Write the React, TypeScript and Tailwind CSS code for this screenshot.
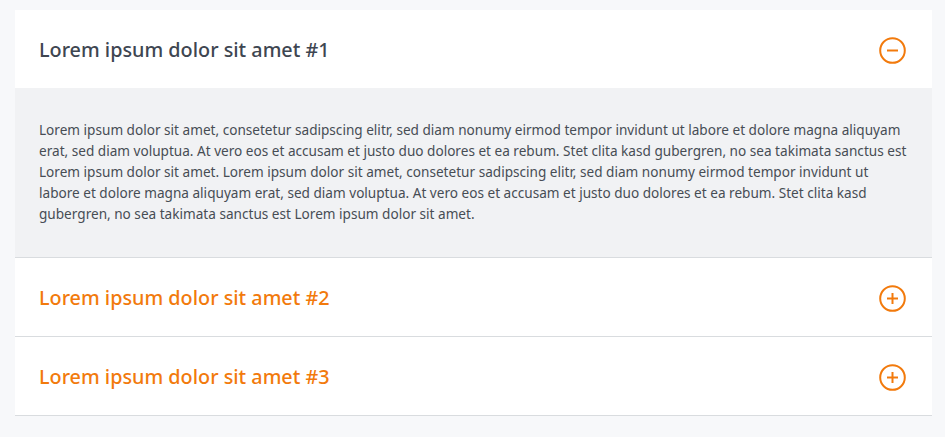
import { useState } from "react";

const items = [
  {
    title: "Lorem ipsum dolor sit amet #1",
    body: "Lorem ipsum dolor sit amet, consetetur sadipscing elitr, sed diam nonumy eirmod tempor invidunt ut labore et dolore magna aliquyam erat, sed diam voluptua. At vero eos et accusam et justo duo dolores et ea rebum. Stet clita kasd gubergren, no sea takimata sanctus est Lorem ipsum dolor sit amet. Lorem ipsum dolor sit amet, consetetur sadipscing elitr, sed diam nonumy eirmod tempor invidunt ut labore et dolore magna aliquyam erat, sed diam voluptua. At vero eos et accusam et justo duo dolores et ea rebum. Stet clita kasd gubergren, no sea takimata sanctus est Lorem ipsum dolor sit amet.",
  },
  {
    title: "Lorem ipsum dolor sit amet #2",
    body: "Lorem ipsum dolor sit amet, consetetur sadipscing elitr, sed diam nonumy eirmod tempor invidunt ut labore et dolore magna aliquyam erat.",
  },
  {
    title: "Lorem ipsum dolor sit amet #3",
    body: "Lorem ipsum dolor sit amet, consetetur sadipscing elitr, sed diam nonumy eirmod tempor invidunt ut labore et dolore magna aliquyam erat.",
  },
];

function ToggleIcon({ open }: { open: boolean }) {
  return (
    <svg width="27" height="27" viewBox="0 0 27 27" fill="none" className="shrink-0">
      <circle cx="13.5" cy="13.5" r="12.3" stroke="#f27a0c" strokeWidth="2" />
      <path d="M8 13.5h11" stroke="#f27a0c" strokeWidth="2" />
      {!open && <path d="M13.5 8v11" stroke="#f27a0c" strokeWidth="2" />}
    </svg>
  );
}

export default function App() {
  const [openIndex, setOpenIndex] = useState<number | null>(0);

  return (
    <div className="min-h-[437px] bg-[#f7f8fa] pt-[10px] pl-[15px] pr-[13px] font-['Noto_Sans',sans-serif]">
      <div className="bg-white">
        {items.map((item, i) => {
          const open = openIndex === i;
          return (
            <div key={i} className="border-b border-[#d9dcdf]">
              <button
                type="button"
                onClick={() => setOpenIndex(open ? null : i)}
                className="flex h-[78px] w-full items-center justify-between pt-[2px] pl-[24px] pr-[26px] text-left"
              >
                <span
                  className={
                    open
                      ? "text-[19.8px] font-medium text-[#3e4651]"
                      : "text-[19.8px] font-medium text-[#f27a0c]"
                  }
                >
                  {item.title}
                </span>
                <ToggleIcon open={open} />
              </button>
              {open && (
                <div className="bg-[#f1f2f4] px-[24px] pt-[31px] pb-[33px]">
                  <p className="text-[13.6px] leading-[21px] text-[#474d54]">{item.body}</p>
                </div>
              )}
            </div>
          );
        })}
      </div>
    </div>
  );
}
